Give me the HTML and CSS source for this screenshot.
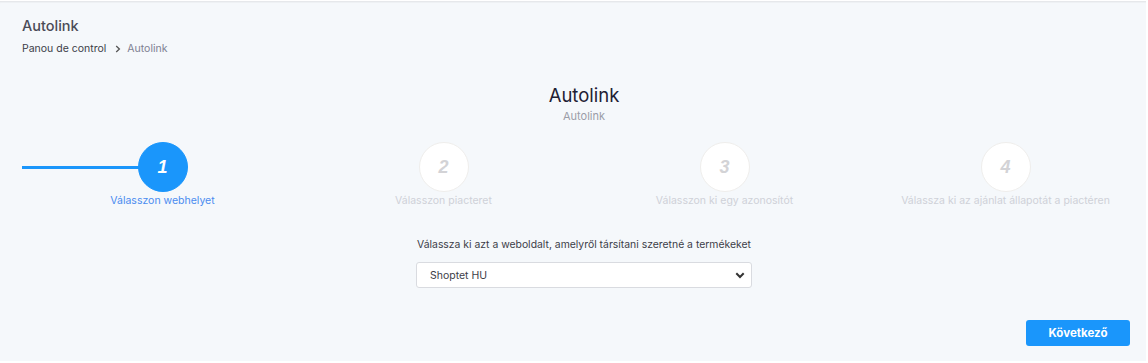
FILE: index.html
```html
<!DOCTYPE html>
<html lang="hu">
<head>
<meta charset="utf-8">
<title>Autolink</title>
<link rel="stylesheet" href="styles.css">
</head>
<body>
<div class="panel">
  <div class="head">
    <h1 class="page-title">Autolink</h1>
    <div class="crumbs">
      <span class="crumb">Panou de control</span>
      <svg class="crumb-sep" width="6" height="8" viewBox="0 0 6 8"><path d="M1.2 1 L4.4 4 L1.2 7" fill="none" stroke="#555" stroke-width="1.3"/></svg>
      <span class="crumb-cur">Autolink</span>
    </div>
  </div>
  <div class="center-head">
    <div class="main-title">Autolink</div>
    <div class="sub-title">Autolink</div>
  </div>
  <div class="stepper">
    <div class="step active">
      <div class="step-row"><div class="line"></div><div class="circle">1</div></div>
      <div class="step-label">Válasszon webhelyet</div>
    </div>
    <div class="step">
      <div class="step-row"><div class="circle">2</div></div>
      <div class="step-label">Válasszon piacteret</div>
    </div>
    <div class="step">
      <div class="step-row"><div class="circle">3</div></div>
      <div class="step-label">Válasszon ki egy azonosítót</div>
    </div>
    <div class="step">
      <div class="step-row"><div class="circle">4</div></div>
      <div class="step-label">Válassza ki az ajánlat állapotát a piactéren</div>
    </div>
  </div>
  <div class="form">
    <label class="form-label">Válassza ki azt a weboldalt, amelyről társítani szeretné a termékeket</label>
    <div class="select">
      <span>Shoptet HU</span>
      <svg width="10" height="7" viewBox="0 0 10 7"><path d="M1.3 1.3 L5 5 L8.7 1.3" fill="none" stroke="#333" stroke-width="2"/></svg>
    </div>
  </div>
  <div class="actions">
    <button class="btn">Következő</button>
  </div>
</div>
</body>
</html>
```
FILE: styles.css
```css
* { box-sizing: border-box; }
html, body { margin: 0; padding: 0; background: #ffffff; }
body {
  font-family: "Inter", "Noto Sans", "DejaVu Sans", sans-serif;
  width: 1148px;
  height: 363px;
  overflow: hidden;
}
.panel {
  width: 1146px;
  height: 360px;
  margin-top: 1px;
  background: #f5f8fb;
  border-top: 1px solid #e6e8eb;
  box-shadow: inset 0 1px 1px rgba(0,0,0,0.03);
  padding: 0 0 0 22px;
}
.head { padding-top: 15px; }
.page-title {
  margin: 0;
  font-size: 14.5px;
  font-weight: 500;
  color: #4a4b57;
  line-height: 18px;
}
.crumbs {
  margin-top: 7px;
  display: flex;
  align-items: center;
  font-size: 10.5px;
  line-height: 14px;
}
.crumb { color: #3c3d48; }
.crumb-sep { margin: 0 6px 0 9px; }
.crumb-cur { color: #7e8192; }
.center-head {
  text-align: center;
  margin-top: 28px;
}
.main-title {
  font-size: 18.5px;
  color: #1f2133;
  line-height: 22px;
}
.sub-title {
  font-size: 11px;
  color: #9b9da8;
  line-height: 14px;
  margin-top: 3px;
}
.stepper {
  display: grid;
  grid-template-columns: repeat(4, 281px);
  margin-top: 19px;
}
.step { display: flex; flex-direction: column; align-items: center; }
.step-row {
  position: relative;
  width: 100%;
  height: 50px;
  display: flex;
  justify-content: center;
}
.line {
  position: absolute;
  left: 0;
  top: 24px;
  width: 120px;
  height: 3px;
  background: #1a96fb;
}
.circle {
  position: relative;
  width: 50px;
  height: 50px;
  border-radius: 50%;
  background: #ffffff;
  border: 1px solid #efeeec;
  display: flex;
  align-items: center;
  justify-content: center;
  font-family: "Liberation Sans", Arial, sans-serif;
  font-style: italic;
  font-weight: 700;
  font-size: 18px;
  color: #d3d3d6;
}
.active .circle {
  background: #1a96fb;
  border-color: #1a96fb;
  color: #ffffff;
}
.step-label {
  margin-top: 2px;
  font-size: 10.5px;
  line-height: 13px;
  color: #cfd1d8;
  white-space: nowrap;
}
.active .step-label { color: #4a8cf0; }
.form {
  display: flex;
  flex-direction: column;
  align-items: center;
  margin-top: 31px;
}
.form-label {
  font-size: 10.4px;
  line-height: 14px;
  color: #3c3d48;
}
.select {
  margin-top: 10px;
  width: 336px;
  height: 26px;
  background: #ffffff;
  border: 1px solid #d9dbe0;
  border-radius: 3px;
  display: flex;
  align-items: center;
  justify-content: space-between;
  padding: 0 6px 0 13px;
  font-size: 10.5px;
  color: #3c3d48;
}
.actions {
  display: flex;
  justify-content: flex-end;
  margin-top: 32px;
  padding-right: 16px;
}
.btn {
  width: 104px;
  height: 26px;
  background: #1a96fb;
  border: none;
  border-radius: 3px;
  color: #ffffff;
  font-family: inherit;
  font-weight: 700;
  font-size: 11.5px;
}
```
